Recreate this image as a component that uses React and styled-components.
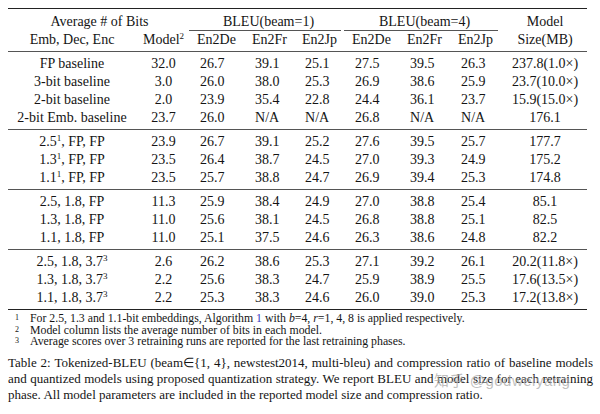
import React from "react";
import styled, { createGlobalStyle } from "styled-components";

const Global = createGlobalStyle`
  html, body {
    margin: 0;
    padding: 0;
    background: #fff;
  }
  body {
    font-family: "Liberation Serif", "Times New Roman", serif;
    color: #141414;
  }
`;

const Page = styled.div`
  position: relative;
  width: 585px;
  padding: 8px 0 0 8px;
`;

const Table = styled.table`
  width: 579px;
  table-layout: fixed;
  border-collapse: collapse;
  font-size: 14px;
  border-top: 1.5px solid #222;
  border-bottom: 1.5px solid #222;
`;

const Head = styled.thead`
  tr:first-child td {
    padding-top: 4px;
  }
  tr:last-child td {
    padding-bottom: 2px;
  }
`;

const Group = styled.tbody`
  border-top: 1px solid #555;
  tr:first-child td {
    padding-top: 3px;
  }
  tr:last-child td {
    padding-bottom: 2px;
  }
`;

const Cell = styled.td`
  padding: 0;
  height: 18px;
  line-height: 18px;
  white-space: nowrap;
  text-align: ${(p) => p.$align || "center"};
  padding-left: ${(p) => (p.$align === "left" ? (p.$head ? 6 : 9) : 0)}px;
`;

const SpanCell = styled.td`
  position: relative;
  padding: 0;
  height: 18px;
  line-height: 18px;
  text-align: center;
  white-space: nowrap;
  &::after {
    content: "";
    position: absolute;
    left: -2px;
    right: 5px;
    bottom: 0;
    border-bottom: 0.8px solid #555;
  }
`;

const Sup = styled.sup`
  font-size: 9px;
  line-height: 0;
  vertical-align: 5px;
`;

const Notes = styled.div`
  margin-top: 3px;
  font-size: 11.8px;
  line-height: 11.5px;
`;

const Note = styled.div`
  display: flex;
`;

const Mark = styled.span`
  width: 15px;
  padding-left: 7px;
  font-size: 8px;
  line-height: 9px;
  flex-shrink: 0;
`;

const Ref = styled.span`
  color: #3b3bbf;
`;

const Caption = styled.p`
  margin: 7px 0 0;
  font-size: 13px;
  line-height: 16px;
  text-align: justify;
`;

const Watermark = styled.div`
  position: absolute;
  left: 434px;
  top: 369px;
  font-family: "Liberation Sans", "Noto Sans CJK SC", sans-serif;
  font-size: 15px;
  color: rgba(170, 170, 170, 0.75);
  letter-spacing: 0.5px;
  pointer-events: none;
`;

const widths = [128, 55, 55, 50, 50, 55, 51, 51, 84];

const groups = [
  [
    ["FP baseline", "32.0", "26.7", "39.1", "25.1", "27.5", "39.5", "26.3", "237.8(1.0×)"],
    ["3-bit baseline", "3.0", "26.0", "38.0", "25.3", "26.9", "38.6", "25.9", "23.7(10.0×)"],
    ["2-bit baseline", "2.0", "23.9", "35.4", "22.8", "24.4", "36.1", "23.7", "15.9(15.0×)"],
    ["2-bit Emb. baseline", "23.7", "26.0", "N/A", "N/A", "26.8", "N/A", "N/A", "176.1"],
  ],
  [
    [["2.5", "1", ", FP, FP"], "23.9", "26.7", "39.1", "25.2", "27.6", "39.5", "25.7", "177.7"],
    [["1.3", "1", ", FP, FP"], "23.5", "26.4", "38.7", "24.5", "27.0", "39.3", "24.9", "175.2"],
    [["1.1", "1", ", FP, FP"], "23.5", "25.7", "38.8", "24.7", "26.9", "39.4", "25.3", "174.8"],
  ],
  [
    ["2.5, 1.8, FP", "11.3", "25.9", "38.4", "24.9", "27.0", "38.8", "25.4", "85.1"],
    ["1.3, 1.8, FP", "11.0", "25.6", "38.1", "24.5", "26.8", "38.8", "25.1", "82.5"],
    ["1.1, 1.8, FP", "11.0", "25.1", "37.5", "24.6", "26.3", "38.6", "24.8", "82.2"],
  ],
  [
    [["2.5, 1.8, 3.7", "3", ""], "2.6", "26.2", "38.6", "25.3", "27.1", "39.2", "26.1", "20.2(11.8×)"],
    [["1.3, 1.8, 3.7", "3", ""], "2.2", "25.6", "38.3", "24.7", "25.9", "38.9", "25.5", "17.6(13.5×)"],
    [["1.1, 1.8, 3.7", "3", ""], "2.2", "25.3", "38.3", "24.6", "26.0", "39.0", "25.3", "17.2(13.8×)"],
  ],
];

const label = (v) => {
  if (typeof v === "string") return v;
  const [text, mark, rest] = v;
  return (
    <>
      {text}
      <Sup>{mark}</Sup>
      {rest}
    </>
  );
};

const BLEU = ["En2De", "En2Fr", "En2Jp"];

const captionText =
  "Table 2: Tokenized-BLEU (beam∈{1, 4}, newstest2014, multi-bleu) and compression ratio of baseline models and quantized models using proposed quantization strategy. We report BLEU and model size for each retraining phase. All model parameters are included in the reported model size and compression ratio.";

export default function App() {
  return (
    <Page>
      <Global />
      <Table>
        <colgroup>
          {widths.map((w, i) => (
            <col key={i} style={{ width: w }} />
          ))}
        </colgroup>
        <Head>
          <tr>
            <Cell colSpan={2}>Average # of Bits</Cell>
            <SpanCell colSpan={3}>BLEU(beam=1)</SpanCell>
            <SpanCell colSpan={3}>BLEU(beam=4)</SpanCell>
            <Cell>Model</Cell>
          </tr>
          <tr>
            <Cell>Emb, Dec, Enc</Cell>
            <Cell>
              Model<Sup>2</Sup>
            </Cell>
            {[...BLEU, ...BLEU].map((h, i) => (
              <Cell key={i} $align="left" $head>
                {h}
              </Cell>
            ))}
            <Cell>Size(MB)</Cell>
          </tr>
        </Head>
        {groups.map((rows, g) => (
          <Group key={g}>
            {rows.map((r, i) => (
              <tr key={i}>
                <Cell>{label(r[0])}</Cell>
                <Cell>{r[1]}</Cell>
                {r.slice(2, 8).map((v, j) => (
                  <Cell key={j} $align="left">
                    {v}
                  </Cell>
                ))}
                <Cell>{r[8]}</Cell>
              </tr>
            ))}
          </Group>
        ))}
      </Table>
      <Notes>
        <Note>
          <Mark>1</Mark>
          <span>
            For 2.5, 1.3 and 1.1-bit embeddings, Algorithm <Ref>1</Ref> with <i>b</i>=4, <i>r</i>=1, 4, 8 is
            applied respectively.
          </span>
        </Note>
        <Note>
          <Mark>2</Mark>
          <span>Model column lists the average number of bits in each model.</span>
        </Note>
        <Note>
          <Mark>3</Mark>
          <span>Average scores over 3 retraining runs are reported for the last retraining phases.</span>
        </Note>
      </Notes>
      <Caption>{captionText}</Caption>
      <Watermark>知乎 @godweiyang</Watermark>
    </Page>
  );
}
